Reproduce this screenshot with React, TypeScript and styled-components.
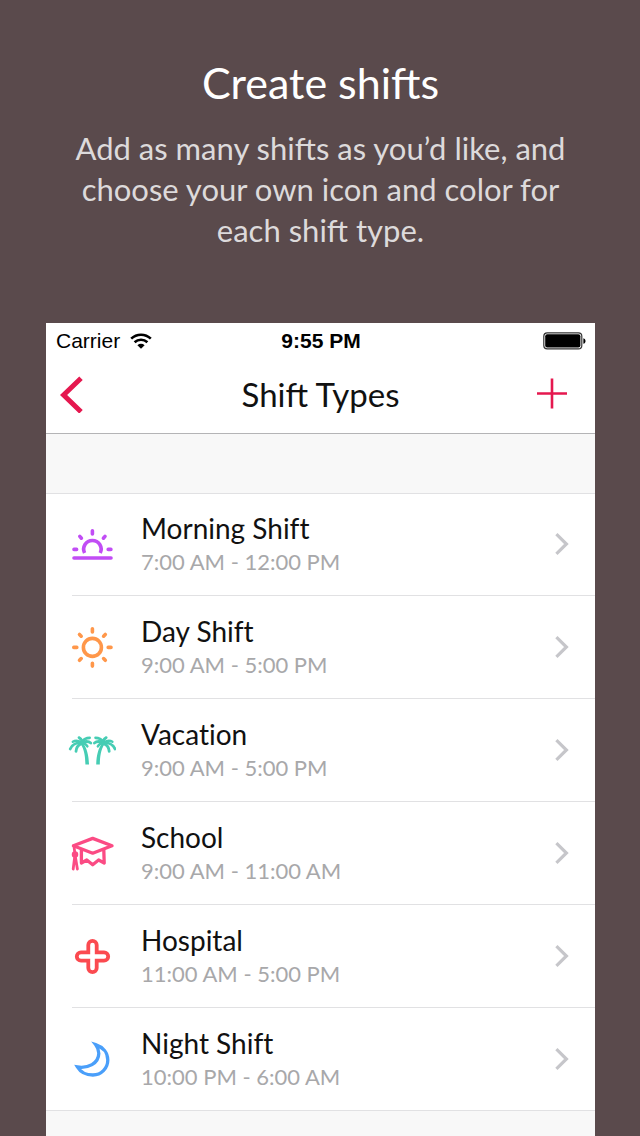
import React from "react";
import styled, { createGlobalStyle } from "styled-components";

const GlobalStyle = createGlobalStyle`
  *, *::before, *::after { box-sizing: border-box; }
  body {
    margin: 0;
    background: #5a4a4c;
    font-family: Lato, "Open Sans", sans-serif;
  }
`;

const Page = styled.main`
  min-height: 100vh;
  display: flex;
  flex-direction: column;
  padding: 0 45px 0 46px;
`;

const Intro = styled.header`
  height: 323px;
  padding-top: 56px;
  text-align: center;
`;

const Headline = styled.h1`
  margin: 0 0 18px;
  font-size: 43px;
  line-height: 54px;
  font-weight: 400;
  color: #ffffff;
`;

const Blurb = styled.p`
  max-width: 510px;
  margin: 0 auto;
  font-size: 31px;
  line-height: 41px;
  color: #dddadb;
`;

const Phone = styled.section`
  flex: 1;
  display: flex;
  flex-direction: column;
  background: #f8f8f8;
`;

const StatusBar = styled.div`
  display: grid;
  grid-template-columns: 1fr auto 1fr;
  align-items: center;
  height: 36px;
  padding: 0 9px 0 10px;
  background: #ffffff;
  color: #000000;
  font-family: "Liberation Sans", Arial, sans-serif;
  font-size: 21px;
  line-height: 24px;
`;

const Carrier = styled.span`
  display: flex;
  align-items: center;
  gap: 10px;
`;

const Clock = styled.time`
  font-weight: 700;
`;

const BatteryIcon = styled.svg`
  justify-self: end;
`;

const NavBar = styled.nav`
  display: grid;
  grid-template-columns: 1fr auto 1fr;
  align-items: center;
  height: 75px;
  padding: 0 27px 4px 13px;
  background: #ffffff;
  border-bottom: 1px solid #b4b4b6;
`;

const NavTitle = styled.h2`
  margin: 0;
  padding-left: 14px;
  font-size: 33px;
  line-height: 40px;
  font-weight: 400;
  color: #111111;
`;

const NavButton = styled.button<{ $end?: boolean }>`
  display: flex;
  justify-self: ${(p) => (p.$end ? "end" : "start")};
  padding: 0;
  border: 0;
  background: none;
  color: #e5184f;
  cursor: pointer;
`;

const ShiftList = styled.ul`
  margin: 59px 0 0;
  padding: 0;
  list-style: none;
  background: #ffffff;
`;

const ShiftItem = styled.li`
  height: 103px;
  padding-left: 26px;

  &:first-child { box-shadow: inset 0 1px #e1e1e3; }
  &:last-child { box-shadow: inset 0 -1px #e1e1e3; }
`;

const ShiftLink = styled.a`
  display: flex;
  align-items: center;
  height: 100%;
  padding-right: 25px;
  border-bottom: 1px solid #e1e1e3;
  color: inherit;
  text-decoration: none;
`;

const ShiftIcon = styled.svg<{ $color: string }>`
  flex: none;
  margin: 0 25px 0 -4px;
  color: ${(p) => p.$color};
`;

const ShiftText = styled.span`
  flex: 1;
  display: flex;
  flex-direction: column;
  min-width: 0;
`;

const ShiftName = styled.span`
  font-size: 28px;
  line-height: 36px;
  font-variant-ligatures: none;
  color: #111111;
`;

const ShiftHours = styled.span`
  font-size: 22px;
  line-height: 32px;
  color: #a8a8aa;
`;

const palm = (
  <>
    <path fill="currentColor" stroke="none" d="M12.6 18C16.6 24 17.2 31 17.4 38.6H21C20.8 30 19 22 15 17Z" />
    <path d="M14 17C9 16.4 4 18.6 2.2 23" />
    <path d="M13.4 17.6C10.2 19 8.2 21.6 8 25.4" />
    <path d="M13.4 16.2C10 14.4 7 14.4 4.8 15.8" strokeWidth="2.4" />
    <path d="M14.2 15.8C13.8 13.8 12.8 12.4 11 11.6" />
    <path d="M14 15.8C16 12.8 18.4 11.8 21.6 11.8" />
    <path d="M14 16.4C18 15 21 15.4 22.8 17" />
    <path d="M14.4 17C16.8 17.6 18.6 18.8 19.4 20.4" strokeWidth="2.4" />
  </>
);

const artwork = {
  sunrise: (
    <g strokeWidth="3.6" strokeLinecap="round">
      <path d="M6 38H43" />
      <path d="M16.6 33A8.7 8.7 0 1 1 32.2 33" strokeLinecap="butt" />
      <path d="M24.4 10.8V14M6 29.4H8.6M40.2 29.4H42.9M11.8 16.4L13.4 18.2M37 16.4L35.4 18.2" />
    </g>
  ),
  sun: (
    <g strokeWidth="3.6" strokeLinecap="round">
      <circle cx="24.4" cy="24.4" r="9" />
      <path d="M24.4 5.8V8.9M24.4 40.2V43.1M5.8 24.4H8.8M40.2 24.4H43M11.5 11.5L13.2 13.2M37.3 11.5L35.6 13.2M11.5 37.3L13.2 35.6M37.3 37.3L35.6 35.6" />
    </g>
  ),
  palms: (
    <g strokeWidth="2.8" strokeLinecap="round">
      {palm}
      <g transform="translate(49.2 0) scale(-1 1)">{palm}</g>
    </g>
  ),
  cap: (
    <g strokeWidth="3.3" strokeLinejoin="round" strokeLinecap="round">
      <path d="M5.4 16.8L24.7 9.4L44 16.8L24.7 24.2Z" />
      <path d="M13.4 21V34L18.8 31L24.7 35.8L30.6 31L36.2 34L35.8 21" />
      <path d="M6 17.4L7 25.4L5.2 40M7 25.4L9.4 40" strokeWidth="2.8" />
      <circle cx="7" cy="25.6" r="1.6" />
    </g>
  ),
  cross: (
    <path
      strokeWidth="3.8"
      d="M20.3 20.3V13a4.2 4.2 0 0 1 8.4 0V20.3H36a4.2 4.2 0 0 1 0 8.4H28.7V36a4.2 4.2 0 0 1-8.4 0V28.7H13a4.2 4.2 0 0 1 0-8.4Z"
    />
  ),
  moon: (
    <path
      strokeWidth="3.3"
      d="M27.6 9.6C35 12 39.8 17.8 39.8 25C39.8 33.4 33.2 40 24.9 40C18 40 12.4 37 9.4 32C20 33.6 30.6 28.6 30.8 18.4C30.8 15 29.4 12 27.6 9.6Z"
    />
  ),
};

const shifts: {
  name: string;
  hours: string;
  icon: keyof typeof artwork;
  color: string;
}[] = [
  { name: "Morning Shift", hours: "7:00 AM - 12:00 PM", icon: "sunrise", color: "#c14df5" },
  { name: "Day Shift", hours: "9:00 AM - 5:00 PM", icon: "sun", color: "#ff974a" },
  { name: "Vacation", hours: "9:00 AM - 5:00 PM", icon: "palms", color: "#46cdb4" },
  { name: "School", hours: "9:00 AM - 11:00 AM", icon: "cap", color: "#fb4b84" },
  { name: "Hospital", hours: "11:00 AM - 5:00 PM", icon: "cross", color: "#fb4a50" },
  { name: "Night Shift", hours: "10:00 PM - 6:00 AM", icon: "moon", color: "#4a9ffa" },
];

export default function App() {
  return (
    <>
      <GlobalStyle />
      <Page>
        <Intro>
          <Headline>Create shifts</Headline>
          <Blurb>
            Add as many shifts as you’d like, and choose your own icon and color for each shift
            type.
          </Blurb>
        </Intro>

        <Phone>
          <StatusBar>
            <Carrier>
              Carrier
              <svg width="22" height="16" viewBox="0 0 22 16" fill="none" aria-hidden="true">
                <path d="M1.2 5.6A14.2 14.2 0 0 1 20.8 5.6" stroke="#000" strokeWidth="2.6" />
                <path d="M4.6 9.2A9.4 9.4 0 0 1 17.4 9.2" stroke="#000" strokeWidth="2.6" />
                <path d="M7.4 12.2A5.2 5.2 0 0 1 14.6 12.2L11 15.8Z" fill="#000" />
              </svg>
            </Carrier>
            <Clock>9:55 PM</Clock>
            <BatteryIcon width="43" height="18" viewBox="0 0 43 18" aria-hidden="true">
              <rect x="0.8" y="0.8" width="38" height="16" rx="3.4" fill="#fff" stroke="#333" strokeWidth="1.2" />
              <rect x="2.2" y="2.2" width="35.2" height="13.2" rx="2" fill="#000" />
              <path d="M40.4 6.2C43.2 6.8 43.2 11.2 40.4 11.8Z" fill="#000" />
            </BatteryIcon>
          </StatusBar>

          <NavBar>
            <NavButton type="button" aria-label="Back">
              <svg width="26" height="38" viewBox="0 0 26 38" fill="none">
                <path d="M22 3.2L4.6 20L22 36.8" stroke="currentColor" strokeWidth="5" />
              </svg>
            </NavButton>
            <NavTitle>Shift Types</NavTitle>
            <NavButton type="button" aria-label="Add shift type" $end>
              <svg width="32" height="32" viewBox="0 0 32 32" fill="none">
                <path d="M1 15.5H31M16 0.5V30.5" stroke="currentColor" strokeWidth="2.6" />
              </svg>
            </NavButton>
          </NavBar>

          <ShiftList>
            {shifts.map((shift) => (
              <ShiftItem key={shift.name}>
                <ShiftLink href="#">
                  <ShiftIcon
                    $color={shift.color}
                    width="48"
                    height="48"
                    viewBox="0 0 48 48"
                    fill="none"
                    stroke="currentColor"
                    aria-hidden="true"
                  >
                    {artwork[shift.icon]}
                  </ShiftIcon>
                  <ShiftText>
                    <ShiftName>{shift.name}</ShiftName>
                    <ShiftHours>{shift.hours}</ShiftHours>
                  </ShiftText>
                  <svg width="16" height="24" viewBox="0 0 16 24" fill="none" aria-hidden="true">
                    <path d="M2.4 2.2L12.4 12L2.4 21.8" stroke="#c6c6ca" strokeWidth="3.2" />
                  </svg>
                </ShiftLink>
              </ShiftItem>
            ))}
          </ShiftList>
        </Phone>
      </Page>
    </>
  );
}
